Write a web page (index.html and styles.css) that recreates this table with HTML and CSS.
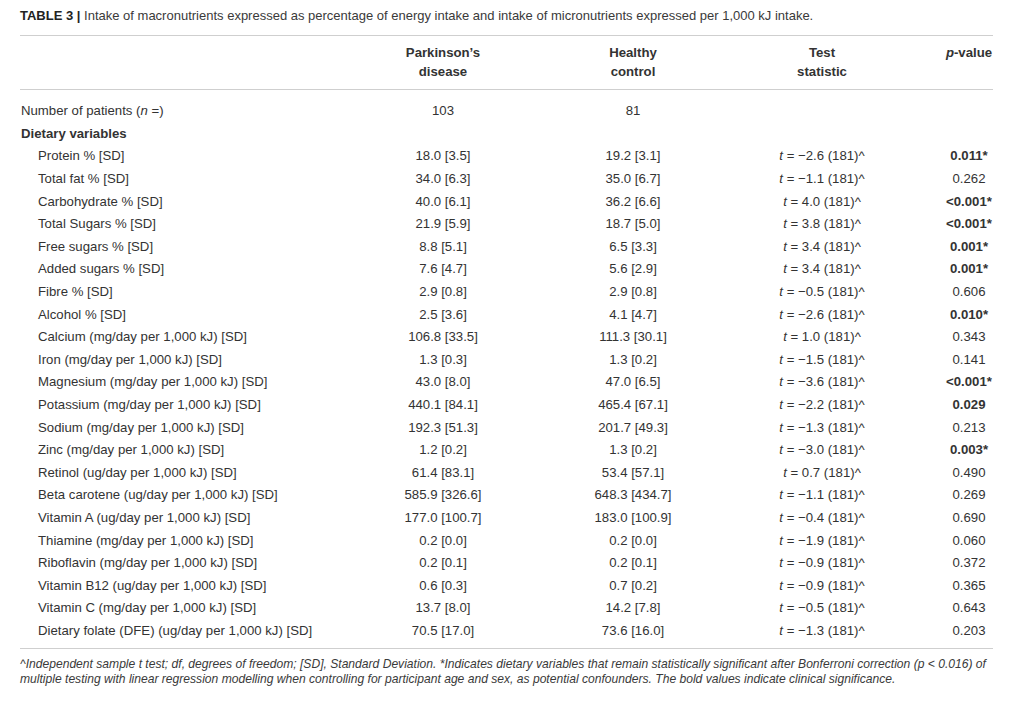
FILE: index.html
```html
<!DOCTYPE html>
<html>
<head>
<meta charset="utf-8">
<link rel="stylesheet" href="styles.css">
</head>
<body>
<div class="page">
  <p class="caption"><b>TABLE 3 |</b> Intake of macronutrients expressed as percentage of energy intake and intake of micronutrients expressed per 1,000 kJ intake.</p>
  <table class="data">
    <colgroup>
      <col class="c1"><col class="c2"><col class="c3"><col class="c4"><col class="c5">
    </colgroup>
    <thead>
      <tr>
        <th></th>
        <th>Parkinson’s<br>disease</th>
        <th>Healthy<br>control</th>
        <th>Test<br>statistic</th>
        <th><i>p</i>-value</th>
      </tr>
    </thead>
    <tbody>
      <tr class="first"><td>Number of patients (<i>n</i> =)</td><td>103</td><td>81</td><td></td><td></td></tr>
      <tr><td class="group">Dietary variables</td><td></td><td></td><td></td><td></td></tr>
      <tr><td class="ind">Protein % [SD]</td><td>18.0 [3.5]</td><td>19.2 [3.1]</td><td><i>t</i> = −2.6 (181)^</td><td class="b">0.011*</td></tr>
      <tr><td class="ind">Total fat % [SD]</td><td>34.0 [6.3]</td><td>35.0 [6.7]</td><td><i>t</i> = −1.1 (181)^</td><td>0.262</td></tr>
      <tr><td class="ind">Carbohydrate % [SD]</td><td>40.0 [6.1]</td><td>36.2 [6.6]</td><td><i>t</i> = 4.0 (181)^</td><td class="b">&lt;0.001*</td></tr>
      <tr><td class="ind">Total Sugars % [SD]</td><td>21.9 [5.9]</td><td>18.7 [5.0]</td><td><i>t</i> = 3.8 (181)^</td><td class="b">&lt;0.001*</td></tr>
      <tr><td class="ind">Free sugars % [SD]</td><td>8.8 [5.1]</td><td>6.5 [3.3]</td><td><i>t</i> = 3.4 (181)^</td><td class="b">0.001*</td></tr>
      <tr><td class="ind">Added sugars % [SD]</td><td>7.6 [4.7]</td><td>5.6 [2.9]</td><td><i>t</i> = 3.4 (181)^</td><td class="b">0.001*</td></tr>
      <tr><td class="ind">Fibre % [SD]</td><td>2.9 [0.8]</td><td>2.9 [0.8]</td><td><i>t</i> = −0.5 (181)^</td><td>0.606</td></tr>
      <tr><td class="ind">Alcohol % [SD]</td><td>2.5 [3.6]</td><td>4.1 [4.7]</td><td><i>t</i> = −2.6 (181)^</td><td class="b">0.010*</td></tr>
      <tr><td class="ind">Calcium (mg/day per 1,000 kJ) [SD]</td><td>106.8 [33.5]</td><td>111.3 [30.1]</td><td><i>t</i> = 1.0 (181)^</td><td>0.343</td></tr>
      <tr><td class="ind">Iron (mg/day per 1,000 kJ) [SD]</td><td>1.3 [0.3]</td><td>1.3 [0.2]</td><td><i>t</i> = −1.5 (181)^</td><td>0.141</td></tr>
      <tr><td class="ind">Magnesium (mg/day per 1,000 kJ) [SD]</td><td>43.0 [8.0]</td><td>47.0 [6.5]</td><td><i>t</i> = −3.6 (181)^</td><td class="b">&lt;0.001*</td></tr>
      <tr><td class="ind">Potassium (mg/day per 1,000 kJ) [SD]</td><td>440.1 [84.1]</td><td>465.4 [67.1]</td><td><i>t</i> = −2.2 (181)^</td><td class="b">0.029</td></tr>
      <tr><td class="ind">Sodium (mg/day per 1,000 kJ) [SD]</td><td>192.3 [51.3]</td><td>201.7 [49.3]</td><td><i>t</i> = −1.3 (181)^</td><td>0.213</td></tr>
      <tr><td class="ind">Zinc (mg/day per 1,000 kJ) [SD]</td><td>1.2 [0.2]</td><td>1.3 [0.2]</td><td><i>t</i> = −3.0 (181)^</td><td class="b">0.003*</td></tr>
      <tr><td class="ind">Retinol (ug/day per 1,000 kJ) [SD]</td><td>61.4 [83.1]</td><td>53.4 [57.1]</td><td><i>t</i> = 0.7 (181)^</td><td>0.490</td></tr>
      <tr><td class="ind">Beta carotene (ug/day per 1,000 kJ) [SD]</td><td>585.9 [326.6]</td><td>648.3 [434.7]</td><td><i>t</i> = −1.1 (181)^</td><td>0.269</td></tr>
      <tr><td class="ind">Vitamin A (ug/day per 1,000 kJ) [SD]</td><td>177.0 [100.7]</td><td>183.0 [100.9]</td><td><i>t</i> = −0.4 (181)^</td><td>0.690</td></tr>
      <tr><td class="ind">Thiamine (mg/day per 1,000 kJ) [SD]</td><td>0.2 [0.0]</td><td>0.2 [0.0]</td><td><i>t</i> = −1.9 (181)^</td><td>0.060</td></tr>
      <tr><td class="ind">Riboflavin (mg/day per 1,000 kJ) [SD]</td><td>0.2 [0.1]</td><td>0.2 [0.1]</td><td><i>t</i> = −0.9 (181)^</td><td>0.372</td></tr>
      <tr><td class="ind">Vitamin B12 (ug/day per 1,000 kJ) [SD]</td><td>0.6 [0.3]</td><td>0.7 [0.2]</td><td><i>t</i> = −0.9 (181)^</td><td>0.365</td></tr>
      <tr><td class="ind">Vitamin C (mg/day per 1,000 kJ) [SD]</td><td>13.7 [8.0]</td><td>14.2 [7.8]</td><td><i>t</i> = −0.5 (181)^</td><td>0.643</td></tr>
      <tr class="last"><td class="ind">Dietary folate (DFE) (ug/day per 1,000 kJ) [SD]</td><td>70.5 [17.0]</td><td>73.6 [16.0]</td><td><i>t</i> = −1.3 (181)^</td><td>0.203</td></tr>
    </tbody>
  </table>
  <p class="note">^Independent sample t test; df, degrees of freedom; [SD], Standard Deviation. *Indicates dietary variables that remain statistically significant after Bonferroni correction (p &lt; 0.016) of multiple testing with linear regression modelling when controlling for participant age and sex, as potential confounders. The bold values indicate clinical significance.</p>
</div>
</body>
</html>
```
FILE: styles.css
```css
html, body {
  margin: 0;
  padding: 0;
  background: #ffffff;
}
body {
  font-family: "Liberation Sans", Arial, sans-serif;
  color: #333333;
}
.page {
  padding: 8px 31px 0 20px;
  width: 973px;
}
.caption {
  margin: 0;
  font-size: 13px;
  line-height: 16px;
  color: #3a3a3a;
}
.caption b {
  color: #222222;
}
.data {
  margin-top: 11px;
  width: 973px;
  border-collapse: collapse;
  table-layout: fixed;
  font-size: 13.2px;
}
.c1 { width: 299px; }
.c2 { width: 248px; }
.c3 { width: 132px; }
.c4 { width: 246px; }
.c5 { width: 48px; }
.data thead tr {
  border-top: 1.5px solid #cfcfcf;
  border-bottom: 1.5px solid #cfcfcf;
}
.data th {
  font-weight: bold;
  text-align: center;
  vertical-align: top;
  line-height: 19px;
  padding: 7px 0 8px;
  color: #333333;
}
.data td {
  text-align: center;
  padding: 0;
  height: 22.6px;
  line-height: 16px;
  white-space: nowrap;
}
.data td:first-child {
  text-align: left;
  padding-left: 1px;
}
.data td.ind {
  padding-left: 18px;
}
.data td.group {
  font-weight: bold;
}
.data td.b {
  font-weight: bold;
}
.data tr.first td {
  padding-top: 10px;
}
.data tr.last {
  border-bottom: 1.5px solid #cfcfcf;
}
.data tr.last td {
  padding-bottom: 6px;
}
.note {
  margin: 7.5px 0 0;
  width: 990px;
  font-size: 12.1px;
  font-style: italic;
  line-height: 15px;
  color: #3a3a3a;
}
```
